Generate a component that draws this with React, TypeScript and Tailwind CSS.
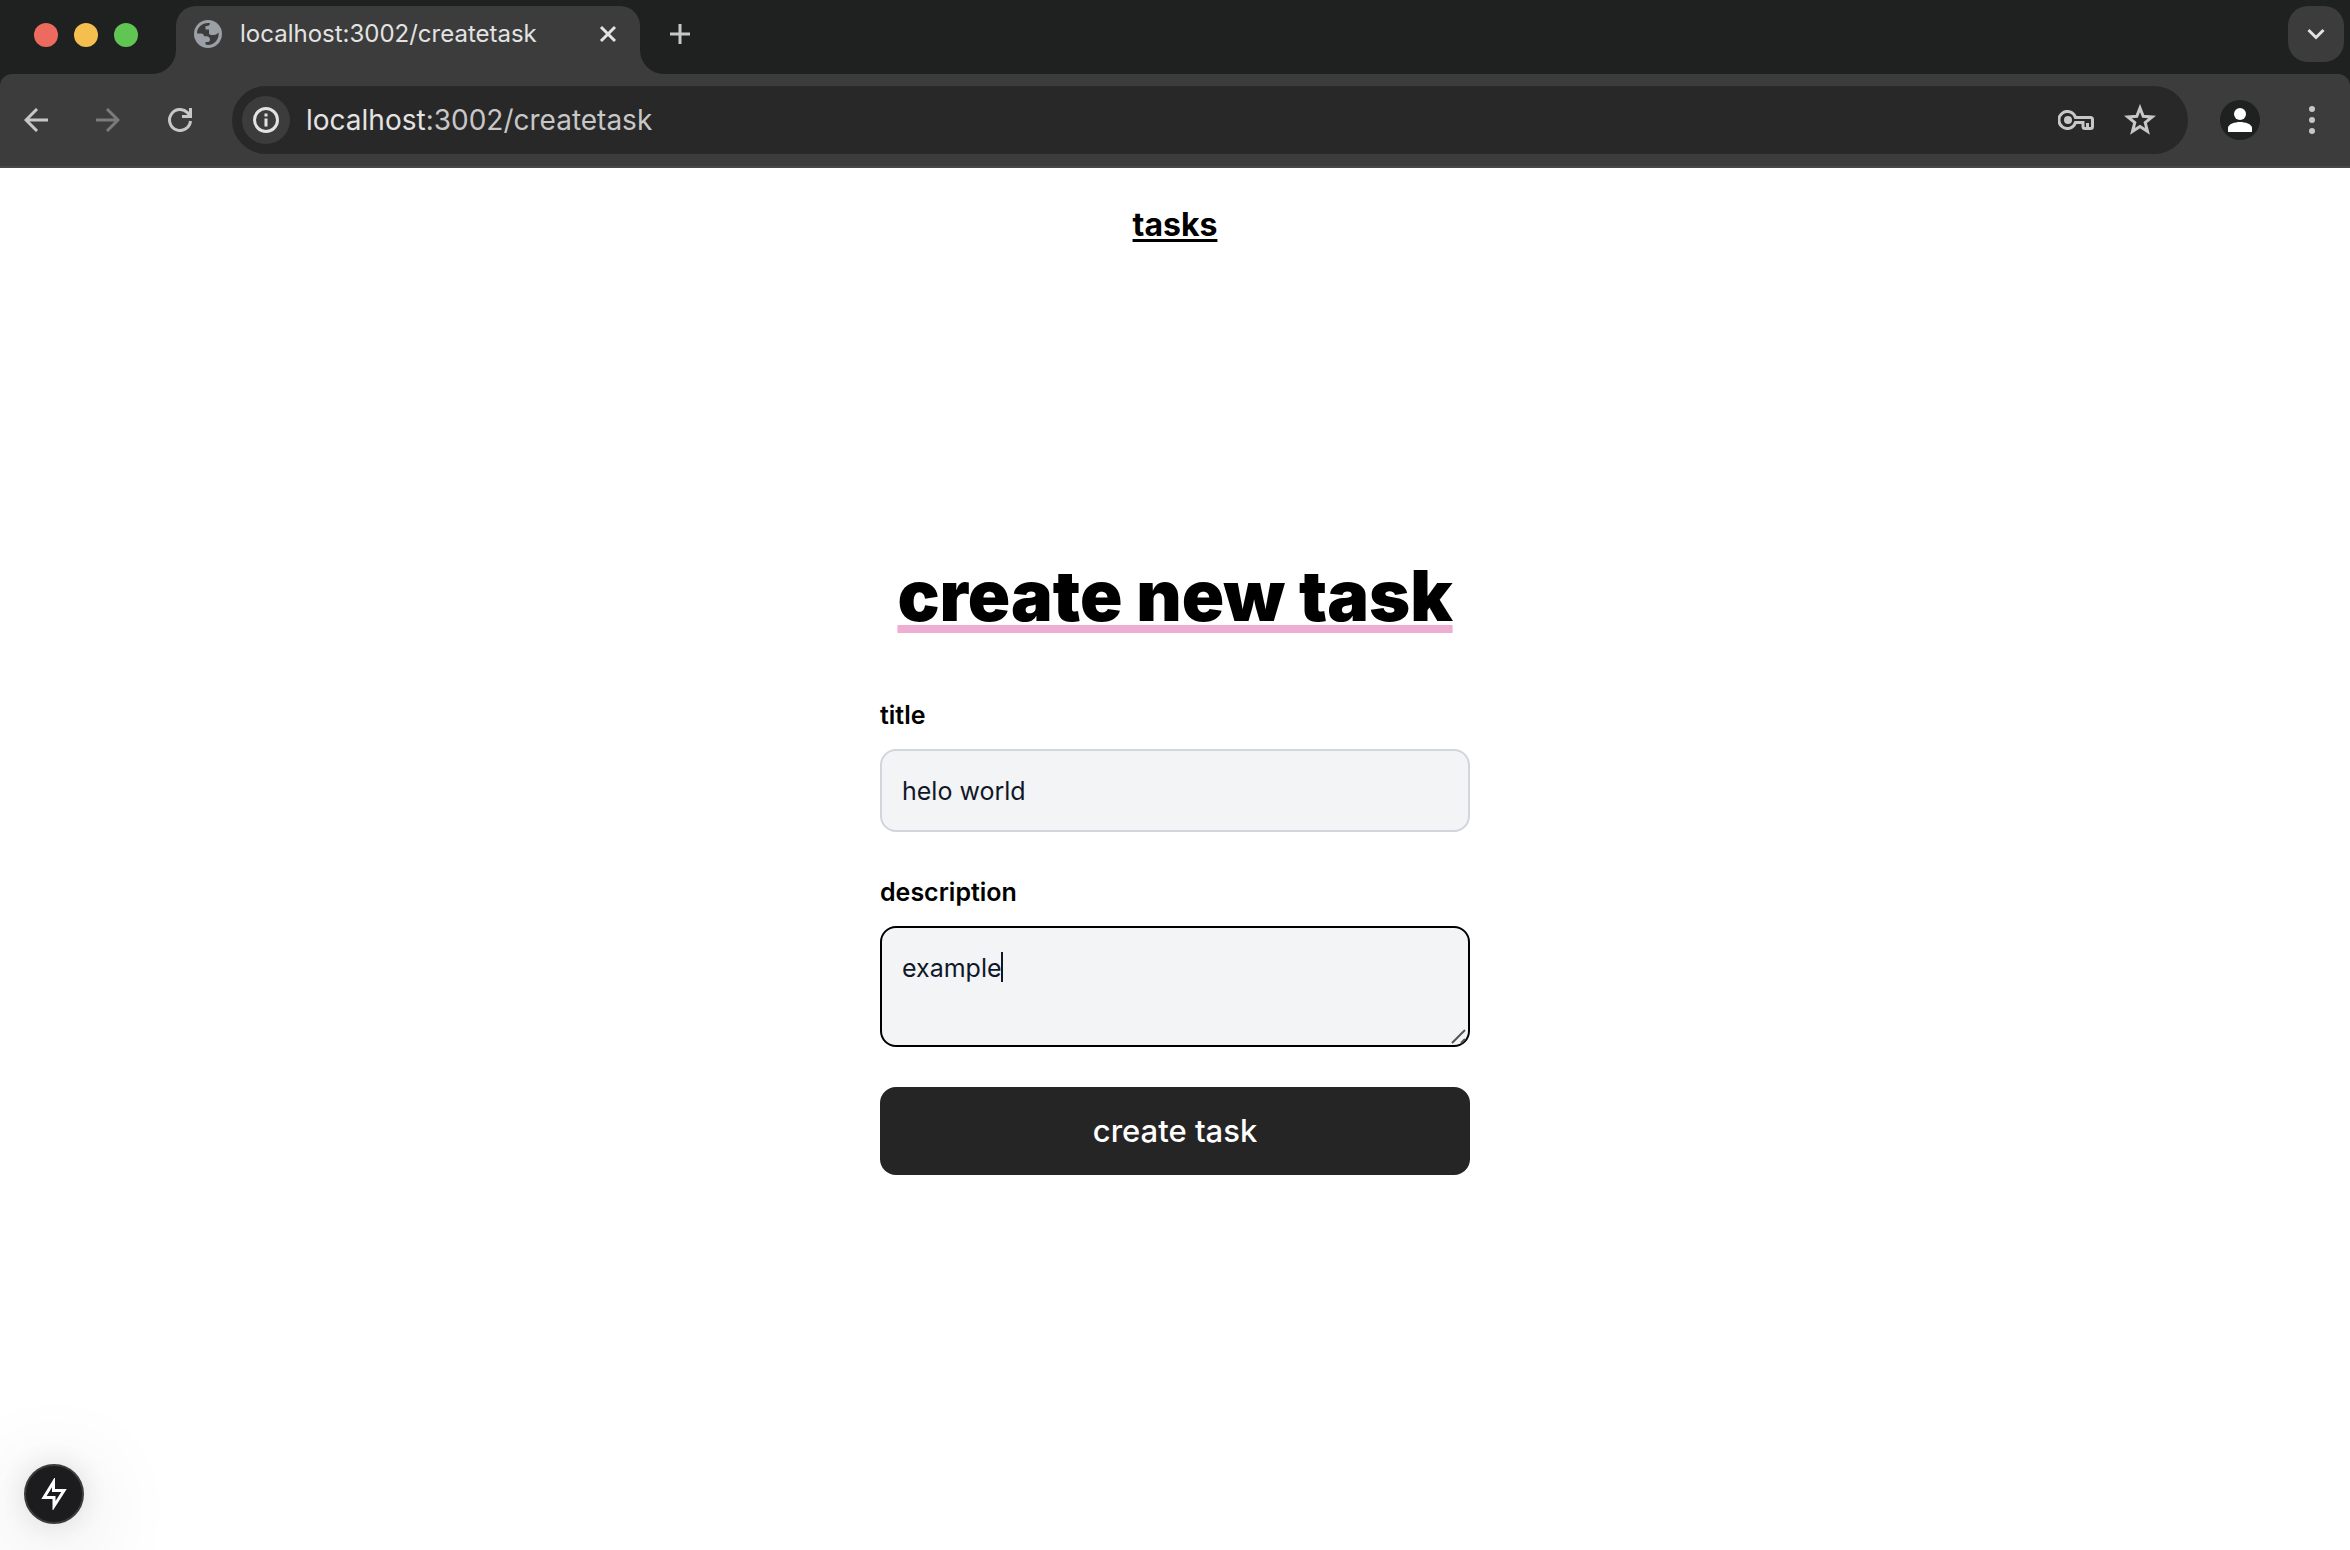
import React from "react";

const toolIcon = "fill-none stroke-[#c7c7c7]";

function Globe() {
  return (
    <svg viewBox="0 0 28 28" className="size-7 shrink-0" aria-hidden="true">
      <circle cx="14" cy="14" r="14" fill="#9aa0a6" />
      <path
        d="M3 13.500C3 7.500 8 3 14 3c.8 0 1.500.1 2 .3-.2 1.700-1.300 2.700-3 2.700h-1.500v3.500h3.500v3.500c0 1.200 1 2 2.200 2H20c1.800 0 3-1 4.500-2.500C25.500 19 20.500 25 14 25c-.8 0-1.800-.2-2.500-.4v-2.600h2.200c1.300 0 2.300-1 2.300-2.300 0-2-1.500-3.500-3.500-3.500H10c0-1.800-1.200-2.700-3-2.700z"
        fill="#3c3c3c"
      />
    </svg>
  );
}

function TabStrip() {
  return (
    <header className="flex h-[74px] items-end bg-[#1f2120] text-[#e3e3e3]">
      <div className="flex h-full w-[152px] shrink-0 items-center gap-4 pb-1 pl-[34px]">
        <span className="size-6 rounded-full bg-[#ed6a5e]" />
        <span className="size-6 rounded-full bg-[#f4bf4f]" />
        <span className="size-6 rounded-full bg-[#61c554]" />
      </div>
      <div className="size-6 shrink-0 bg-[#3c3c3c]">
        <div className="size-full rounded-br-[24px] bg-[#1f2120]" />
      </div>
      <div className="flex h-[68px] w-[464px] shrink-0 items-center rounded-t-[20px] bg-[#3c3c3c] pr-[22px] pb-3 pl-[18px]">
        <Globe />
        <span className="ml-[18px] grow text-2xl whitespace-nowrap">localhost:3002/createtask</span>
        <button aria-label="Close tab">
          <svg viewBox="0 0 20 20" className="size-5 fill-none stroke-[#e3e3e3] stroke-[3]">
            <path d="M3 3l14 14M17 3L3 17" />
          </svg>
        </button>
      </div>
      <div className="size-6 shrink-0 bg-[#3c3c3c]">
        <div className="size-full rounded-bl-[24px] bg-[#1f2120]" />
      </div>
      <button aria-label="New tab" className="flex h-full w-8 items-center justify-center pb-[6px]">
        <svg viewBox="0 0 20 20" className={`size-5 stroke-[3] ${toolIcon}`}>
          <path d="M10 0v20M0 10h20" />
        </svg>
      </button>
      <button
        aria-label="Search tabs"
        className="mr-[6px] mb-3 ml-auto flex size-14 items-center justify-center rounded-[20px] bg-[#3c3c3c]"
      >
        <svg viewBox="0 0 18 12" className="h-3 w-[18px] fill-none stroke-[#e3e3e3] stroke-[3]">
          <path d="M1.500 2L9 9.500 16.500 2" />
        </svg>
      </button>
    </header>
  );
}

function Toolbar() {
  return (
    <div className="bg-[#1f2120]">
      <div className="flex h-[94px] items-center rounded-t-[12px] border-b-2 border-[#474747] bg-[#3c3c3c] pl-6">
        <button aria-label="Back">
          <svg viewBox="0 0 24 24" className={`size-6 stroke-[3] ${toolIcon}`}>
            <path d="M24 12H2M13 1L2 12l11 11" />
          </svg>
        </button>
        <button aria-label="Forward" className="ml-12">
          <svg viewBox="0 0 24 24" className="size-6 fill-none stroke-[#7b7b7b] stroke-[3]">
            <path d="M0 12h22M11 1l11 11-11 11" />
          </svg>
        </button>
        <button aria-label="Reload" className="ml-12">
          <svg viewBox="0 0 24 24" className={`size-6 stroke-[3] ${toolIcon}`}>
            <path d="M22.500 13A10.500 10.500 0 1 1 19.500 4.600L22 8M22.500 0v8.500H14" />
          </svg>
        </button>
        <div className="ml-10 flex h-[68px] grow items-center rounded-full bg-[#282828] pr-8 pl-[10px]">
          <button
            aria-label="View site information"
            className="flex size-12 shrink-0 items-center justify-center rounded-full bg-[#3c3c3c]"
          >
            <svg viewBox="0 0 26 26" className="size-[26px] fill-none stroke-[#e3e3e3] stroke-[3]">
              <circle cx="13" cy="13" r="11.500" />
              <path d="M13 11.500v8M13 6.500v3" />
            </svg>
          </button>
          <div className="ml-4 grow text-[28px] leading-9 text-[#c7c7c7]">
            <span className="text-[#e3e3e3]">localhost</span>:3002/createtask
          </div>
          <button aria-label="Manage passwords">
            <svg viewBox="0 0 36 20" className={`h-5 w-9 stroke-[3] ${toolIcon}`}>
              <path d="M17.500 7.500A8.500 8.500 0 1 0 17.500 12.500H25V16.500q0 2 2 2h5.500q2 0 2-2V9.500q0-2-2-2z" />
              <circle cx="10" cy="10" r="4" className="fill-[#c7c7c7] stroke-none" />
              <path d="M29.500 13v5" />
            </svg>
          </button>
          <button aria-label="Bookmark this tab" className="ml-[30px]">
            <svg viewBox="0 0 32 32" className={`size-8 stroke-[3] ${toolIcon}`}>
              <path d="M16 4l3.200 8.300 9 .6-7 5.700 2.300 8.700L16 22.500l-7.500 4.800 2.300-8.700-7-5.700 9-.6z" />
            </svg>
          </button>
        </div>
        <button
          aria-label="Profile"
          className="ml-8 flex size-10 shrink-0 items-center justify-center rounded-full bg-[#1f2120]"
        >
          <svg viewBox="0 0 24 24" className="size-6 fill-white">
            <circle cx="12" cy="6" r="6" />
            <path d="M0 24v-4c0-4 7-6 12-6s12 2 12 6v4z" />
          </svg>
        </button>
        <button aria-label="Menu" className="mr-[35px] ml-[49px] flex flex-col gap-[5px]">
          <span className="size-[6px] rounded-full bg-[#c7c7c7]" />
          <span className="size-[6px] rounded-full bg-[#c7c7c7]" />
          <span className="size-[6px] rounded-full bg-[#c7c7c7]" />
        </button>
      </div>
    </div>
  );
}

const label = "block text-[25px] leading-9 font-semibold";
const field =
  "block w-full rounded-2xl border-2 bg-gray-100 px-5 text-[25px] leading-9 text-gray-900 outline-none";

export default function App() {
  return (
    <div className="flex min-h-screen flex-col overflow-hidden bg-white font-['Inter',sans-serif] text-black">
      <TabStrip />
      <Toolbar />
      <nav className="flex justify-center pt-[33px]">
        <a href="#tasks" className="text-[32px] leading-[48px] font-bold underline decoration-[3px] underline-offset-[3px]">
          tasks
        </a>
      </nav>
      <main className="flex grow flex-col items-center pt-[311px]">
        <h1 className="text-[70px] leading-[72px] font-black underline decoration-[#edaed2] decoration-8 underline-offset-4">
          create new task
        </h1>
        <form className="mt-[65px] w-[590px]" onSubmit={(e) => e.preventDefault()}>
          <label htmlFor="title" className={label}>
            title
          </label>
          <input id="title" defaultValue="helo world" className={`mt-4 h-[83px] border-gray-300 ${field}`} />
          <label htmlFor="description" className={`mt-[42px] ${label}`}>
            description
          </label>
          <div className="relative mt-4">
            <textarea
              id="description"
              defaultValue="example"
              className={`h-[121px] resize-none border-black py-[22px] caret-transparent ${field}`}
            />
            <span className="absolute top-[26px] left-[121px] h-[30px] w-[2px] bg-gray-900" />
            <svg viewBox="0 0 16 16" className="absolute right-[3px] bottom-[3px] size-4 fill-none stroke-[#555] stroke-2">
              <path d="M1 15L14 2M10 15l4-4" />
            </svg>
          </div>
          <button className="mt-10 h-[88px] w-full rounded-2xl bg-[#252525] text-[31px] leading-10 font-medium text-white">
            create task
          </button>
        </form>
      </main>
      <button
        aria-label="Developer tools"
        className="fixed bottom-[26px] left-6 flex size-[60px] items-center justify-center rounded-full border-2 border-[#3c3c3c] bg-[#1c1c1e] shadow-[0_0_32px_rgba(0,0,0,0.12),0_16px_96px_rgba(0,0,0,0.2)]"
      >
        <svg viewBox="0 0 26 32" className="h-8 w-[26px] fill-none stroke-white stroke-[3]">
          <path d="M12.500 4L3 19.500h10v8.500L23 12.500H12.500z" />
        </svg>
      </button>
    </div>
  );
}
